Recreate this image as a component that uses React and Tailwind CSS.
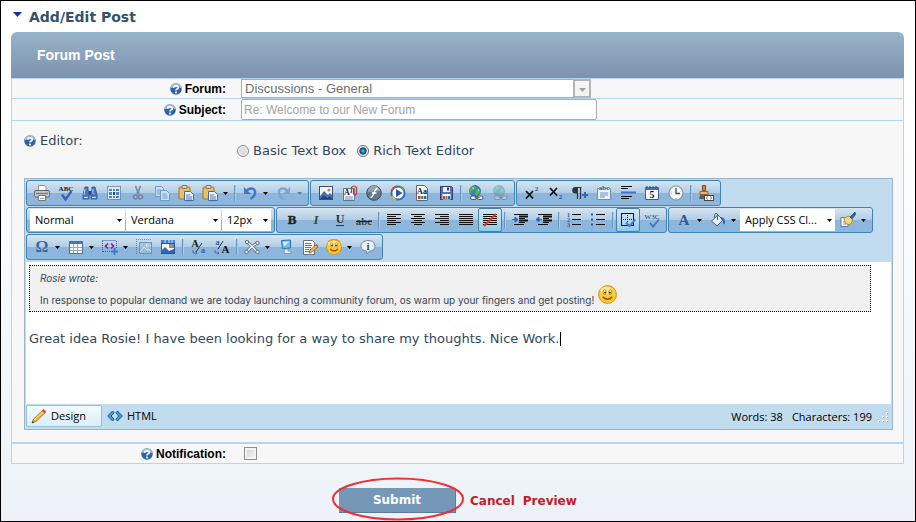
import React from "react";

const verdana = "font-['DejaVu_Sans',sans-serif]";
const arial = "font-['Liberation_Sans',sans-serif]";
const segoe = "font-['Open_Sans',sans-serif]";
const quote = "font-['Inter','Liberation_Sans',sans-serif]";

const Svg = ({ children, className = "size-4" }) => (
  <svg viewBox="0 0 16 16" className={`${className} shrink-0`} fill="none" aria-hidden="true">
    {children}
  </svg>
);

const Lines = ({ rows, stroke = "#111" }) => (
  <g stroke={stroke} strokeWidth="1">
    {rows.map(([x1, x2, y]) => (
      <path key={y} d={`M${x1} ${y + 0.5}H${x2}`} />
    ))}
  </g>
);

const clipboard = (
  <>
    <rect x="1" y="2" width="11" height="12" rx="1" fill="#f0bd5c" stroke="#a8742a" />
    <rect x="4" y="0.5" width="5" height="3" rx="1" fill="#ddd" stroke="#6d6d6d" />
    <path d="M6.500 6.500h6l3 3v6h-9z" fill="#eef5ff" stroke="#3f68a8" />
    <path d="M8 10h4M8 12h6M8 14h6" stroke="#4d78b5" />
  </>
);

const picture = (
  <>
    <rect x="1.500" y="1.500" width="13" height="13" fill="#f3f8ff" stroke="#31527f" />
    <path d="M2 14v-3l4-5 4 4 2-2 2 2v4z" fill="#4a6fae" />
    <path d="M2 14l4-4 3 3 3-2 2 3z" fill="#27457c" />
    <circle cx="11" cy="5" r="1.600" fill="#e07f33" />
  </>
);

const globe = (
  <>
    <circle cx="7" cy="6" r="5.500" fill="#3b82c8" stroke="#1c5a8a" strokeWidth=".6" />
    <path d="M3 2.500q3-2 5 0l-1 2-3 1-2 3q-1-3 1-6zM8 5l3-1 1 3-3 4-2-2z" fill="#58b83c" />
    <path d="M4 2.500l2 1M10 4l1 2" stroke="#d3f2a8" strokeWidth=".8" />
    <rect x="2.500" y="11" width="6" height="3.500" rx="1.700" fill="#e9edf2" stroke="#4b5663" />
    <rect x="9" y="11" width="6" height="3.500" rx="1.700" fill="#e9edf2" stroke="#4b5663" />
    <path d="M6.500 12.700h5" stroke="#4b5663" />
  </>
);

const smile = (
  <>
    <circle cx="8" cy="8" r="7.500" fill="#fbcf2d" stroke="#d38a12" strokeWidth=".8" />
    <ellipse cx="7" cy="4.500" rx="5" ry="3" fill="#ffe97b" />
    <ellipse cx="5.600" cy="6" rx="1.300" ry="2" fill="#fff" stroke="#775017" strokeWidth=".5" />
    <ellipse cx="10.400" cy="6" rx="1.300" ry="2" fill="#fff" stroke="#775017" strokeWidth=".5" />
    <circle cx="5.900" cy="6.400" r=".8" fill="#2b1a05" />
    <circle cx="10.100" cy="6.400" r=".8" fill="#2b1a05" />
    <path d="M4 10q4 4 8 0" stroke="#b3401a" strokeWidth="1.200" />
  </>
);

const glyph = (text, props) => (
  <text fontFamily="Liberation Serif, serif" textAnchor="middle" {...props}>
    {text}
  </text>
);

const icons = {
  print: (
    <>
      <path d="M4.500 6V.500h6l1.500 2V6" fill="#fff" stroke="#8a8a8a" />
      <rect x=".5" y="5.500" width="15" height="6.500" rx="1.500" fill="#c9cbd0" stroke="#60646c" />
      <path d="M2 8.500h12" stroke="#7b7f87" strokeWidth="1.500" />
      <path d="M4.500 10.500h7v5h-7z" fill="#fff" stroke="#777" />
      <path d="M6 13.500h4" stroke="#999" />
      <circle cx="13" cy="7" r=".7" fill="#e0953e" />
    </>
  ),
  spell: (
    <>
      {glyph("ABC", { x: 8, y: 6, fontSize: 7, fontWeight: 700, fill: "#222" })}
      <path d="M4 9.500l3.500 5 6-8.500" stroke="#3c62b5" strokeWidth="2.400" />
    </>
  ),
  find: (
    <>
      <path d="M3 2h3v3l1 2v7H1v-4zM10 2h3l2 8v4H9V7l1-2z" fill="#4c76bd" stroke="#2c4f8c" strokeWidth=".8" />
      <path d="M7 6h2v4H7z" fill="#2c4f8c" />
      <path d="M3 4l-1 6M11 4v5" stroke="#b9d0f2" />
      <path d="M2 12.500h4M10 12.500h4" stroke="#dce8fa" />
    </>
  ),
  selectAll: (
    <>
      <rect x="1.500" y="1.500" width="13" height="13" stroke="#244e91" strokeDasharray="1 1" fill="#dcebfa" />
      <path d="M3 4h10v9H3z" fill="#4c83cc" />
      <path d="M3 6.500h10M3 10.500h10M6.500 4v9M9.500 4v9" stroke="#e9f3ff" />
      <path d="M7 7h2v3H7z" fill="#1c4382" />
    </>
  ),
  cut: (
    <g stroke="#7489a3" strokeWidth="1.600">
      <path d="M5.500 1l3 8M10.500 1l-3 8" />
      <circle cx="5.500" cy="12" r="2" />
      <circle cx="10.500" cy="12" r="2" />
      <path d="M6.500 8h3" />
    </g>
  ),
  copy: (
    <g fill="#c9dff4" stroke="#6f9bcb">
      <path d="M1.500 1.500h6l2 2v8h-8z" />
      <path d="M3 5h4M3 7h4M3 9h3" />
      <path d="M6.500 5.500h6l3 3v7h-9z" />
      <path d="M8.500 9h4M8.500 11h5M8.500 13h5" />
    </g>
  ),
  paste: clipboard,
  undo: (
    <>
      <path d="M4.500 6C8 1.500 14 3.500 13 8.500c-.4 2.500-2 4-4.500 5.500" stroke="#3f78cb" strokeWidth="2.400" />
      <path d="M2 2v7h7z" fill="#3f78cb" />
    </>
  ),
  redo: (
    <>
      <path d="M11.500 6C8 1.500 2 3.500 3 8.500c.4 2.500 2 4 4.500 5.500" stroke="#7ba6d3" strokeWidth="2.400" />
      <path d="M14 2v7H7z" fill="#7ba6d3" />
    </>
  ),
  image: picture,
  doc: (
    <>
      <path d="M1.500 3.500h11v12h-11z" fill="#f8fbff" stroke="#5f7590" />
      {glyph("A", { x: 5, y: 10, fontSize: 8, fontWeight: 700, fill: "#111" })}
      <path d="M8 7h1M3 12h8M3 14h8" stroke="#6b8bb6" />
      <path d="M9.500 8V2.500q2.500-3 5 0V9q-1.500 2-3 0V4" stroke="#c0352d" strokeWidth="1.200" />
    </>
  ),
  flash: (
    <>
      <circle cx="8" cy="8" r="7.300" fill="#66788c" stroke="#3d4b5b" />
      <path d="M2 7a6 6 0 0112-1z" fill="#95a4b3" />
      <path d="M11.500 3.500C8 3.500 8 12.500 4.500 12.500M6 8h4.500" stroke="#fff" strokeWidth="1.600" />
    </>
  ),
  media: (
    <>
      <circle cx="8" cy="8" r="6.600" stroke="#2f6fc4" strokeWidth="2" fill="#fff" />
      <path d="M2 5a6.600 6.600 0 014.500-3.600" stroke="#d9482e" strokeWidth="2" />
      <path d="M9.500 1.600A6.600 6.600 0 0114 5.500" stroke="#56a83a" strokeWidth="2" />
      <path d="M2 11a6.600 6.600 0 004 3.300" stroke="#e6b52c" strokeWidth="2" />
      <path d="M6 4l6.500 4L6 12z" fill="#2456ab" />
    </>
  ),
  template: (
    <>
      <path d="M2.500.500h8l3 3v12h-11z" fill="#fff" stroke="#5c6773" />
      {glyph("Aa", { x: 8, y: 9, fontSize: 8, fontWeight: 700, fill: "#111" })}
      <path d="M4 11h2.500v3H4z" fill="#cf3f32" />
      <path d="M7 11h2.500v3H7z" fill="#3aa03d" />
      <path d="M10 11h2.500v3H10z" fill="#3264bd" />
    </>
  ),
  save: (
    <>
      <path d="M2.500 1.500h11l1 1v12h-12z" fill="#5a70bd" stroke="#2b3b7b" />
      <path d="M5 2h7v5H5z" fill="#edf2fb" />
      <path d="M9 2.500h2v3H9z" fill="#2b3b7b" />
      <path d="M4.500 9h8v5.500h-8z" fill="#fff" />
      <path d="M5 11h2v3H5z" fill="#cf3f32" />
      <path d="M7.500 11h2v3h-2z" fill="#3aa03d" />
      <path d="M10 11h2v3h-2z" fill="#3264bd" />
    </>
  ),
  link: globe,
  unlink: <g opacity=".4">{globe}</g>,
  sup: (
    <>
      <path d="M2 6l7 7.500M9 6l-7 7.500" stroke="#111" strokeWidth="1.800" />
      {glyph("2", { x: 12.5, y: 6, fontSize: 7, fontWeight: 700, fill: "#2f55a5" })}
    </>
  ),
  sub: (
    <>
      <path d="M2 3l7 7.500M9 3l-7 7.500" stroke="#111" strokeWidth="1.800" />
      {glyph("2", { x: 12.5, y: 14, fontSize: 7, fontWeight: 700, fill: "#2f55a5" })}
    </>
  ),
  paragraph: (
    <>
      <path d="M9.500 2.500H4M5.500 8v6M8.500 2v12" stroke="#333" strokeWidth="1.200" />
      <path d="M6 2H3.500a3 3 0 000 6.500H6z" fill="#333" />
      <path d="M10 10h6M13 7v6" stroke="#3466bd" strokeWidth="2" />
    </>
  ),
  groupbox: (
    <>
      <path d="M1.500 3.500h13v11h-13z" fill="#eaf3fd" stroke="#6b8fc0" />
      <path d="M3 1h10v4H3z" fill="#d3e4f4" />
      {glyph("abc", { x: 8, y: 5, fontSize: 7, fontWeight: 700, fill: "#2a4d91" })}
      <path d="M4 8h8M4 10h8M4 12h5" stroke="#6b8fc0" />
    </>
  ),
  rule: (
    <>
      <Lines rows={[[1, 12, 1], [1, 8, 3], [1, 12, 11], [1, 9, 13]]} />
      <path d="M1 7.500h15" stroke="#3b72cb" strokeWidth="2" />
    </>
  ),
  date: (
    <>
      <path d="M1.500 2.500h13v12h-13z" fill="#fff" stroke="#3d5c93" />
      <path d="M1.500 2h13v3h-13z" fill="#466fb4" />
      <path d="M3 1v2M6 1v2M9 1v2M12 1v2" stroke="#24427c" />
      {glyph("5", { x: 8, y: 13, fontSize: 10, fontWeight: 700, fill: "#111" })}
    </>
  ),
  time: (
    <>
      <circle cx="8" cy="8" r="7" fill="#f7f9fb" stroke="#8a96a4" strokeWidth="1.200" />
      <path d="M8 3v5.500h4" stroke="#38506e" strokeWidth="1.300" />
      <path d="M2.500 8h1M8 13v1" stroke="#888" />
    </>
  ),
  formatStrip: (
    <>
      <path d="M4.500.500h3v5h-3z" fill="#d98445" stroke="#8d4a20" />
      <path d="M2 6.500h8v3H2z" fill="#e8b27c" stroke="#8d4a20" strokeWidth=".8" />
      <path d="M2 10h7l-1 4H1z" fill="#5c6068" />
      <rect x="6.500" y="10.500" width="9" height="5" fill="#fff" stroke="#444" />
      <path d="M9.500 11.500L8.500 13l1 1.500M12.500 11.500l1 1.500-1 1.500" stroke="#333" strokeWidth=".8" />
    </>
  ),
  bold: glyph("B", { x: 8, y: 12, fontSize: 13, fontWeight: 700, fill: "#222", stroke: "#222", strokeWidth: 0.4 }),
  italic: glyph("I", { x: 8, y: 12, fontSize: 13, fontWeight: 700, fontStyle: "italic", fill: "#444" }),
  underline: (
    <>
      {glyph("U", { x: 8, y: 11, fontSize: 12, fontWeight: 700, fill: "#333" })}
      <path d="M4 13.500h8" stroke="#333" />
    </>
  ),
  strike: (
    <>
      {glyph("abc", { x: 8, y: 13, fontSize: 11, fontWeight: 700, fill: "#444" })}
      <path d="M0 9.500h16" stroke="#222" />
    </>
  ),
  left: <Lines rows={[[1, 15, 2], [1, 10, 4], [1, 15, 6], [1, 10, 8], [1, 15, 10], [1, 10, 12]]} />,
  center: <Lines rows={[[1, 15, 2], [4, 12, 4], [1, 15, 6], [4, 12, 8], [1, 15, 10], [4, 12, 12]]} />,
  right: <Lines rows={[[1, 15, 2], [6, 15, 4], [1, 15, 6], [6, 15, 8], [1, 15, 10], [6, 15, 12]]} />,
  justify: <Lines rows={[[1, 15, 2], [1, 15, 4], [1, 15, 6], [1, 15, 8], [1, 15, 10], [1, 15, 12]]} />,
  noAlign: (
    <>
      <Lines rows={[[1, 15, 2], [1, 15, 4], [1, 15, 6], [1, 15, 8], [1, 15, 10], [1, 15, 12]]} />
      <path d="M2 14L14 2" stroke="#e03a1c" strokeWidth="1.800" />
    </>
  ),
  indent: (
    <>
      <Lines rows={[[2, 16, 2], [7, 16, 4], [7, 13, 6], [7, 16, 8], [7, 13, 10], [2, 12, 12]]} />
      <path d="M7 4.500h9M7 8.500h9" stroke="#111" strokeWidth="2" />
      <path d="M0 7.500h3V5l3 2.500L3 10V7.500z" fill="#2e63bb" stroke="#2e63bb" />
    </>
  ),
  outdent: (
    <>
      <Lines rows={[[2, 16, 2], [7, 16, 4], [7, 13, 6], [7, 16, 8], [7, 13, 10], [2, 12, 12]]} />
      <path d="M7 4.500h9M7 8.500h9" stroke="#111" strokeWidth="2" />
      <path d="M6 7.500H3V5L0 7.500 3 10V7.500z" fill="#2e63bb" stroke="#2e63bb" />
    </>
  ),
  ordered: (
    <>
      <Lines rows={[[6, 15, 2], [6, 15, 7], [6, 15, 12]]} />
      {glyph("1", { x: 2.5, y: 5, fontSize: 6, fontWeight: 700, fill: "#2f55a5" })}
      {glyph("2", { x: 2.5, y: 10, fontSize: 6, fontWeight: 700, fill: "#2f55a5" })}
      {glyph("3", { x: 2.5, y: 15, fontSize: 6, fontWeight: 700, fill: "#2f55a5" })}
    </>
  ),
  unordered: (
    <>
      <Lines rows={[[6, 15, 2], [6, 15, 7], [6, 15, 12]]} />
      <path d="M1 1.500h2v2H1zM1 6.500h2v2H1zM1 11.500h2v2H1z" fill="#2f55a5" />
    </>
  ),
  borders: (
    <>
      <rect x="1.500" y="1.500" width="12" height="12" stroke="#111" />
      <path d="M7.500 3v10M3 7.500h10" stroke="#111" strokeDasharray="1 1" />
      <path d="M6 10.500l3.500 3.500 6-6.500" stroke="#4b7ed0" strokeWidth="2" />
    </>
  ),
  w3c: (
    <>
      {glyph("W3C", { x: 8, y: 6.5, fontSize: 7, fill: "#2b3d66" })}
      <path d="M6 11l3 3.500 6-7" stroke="#4774c4" strokeWidth="1.800" />
    </>
  ),
  color: glyph("A", { x: 8, y: 13, fontSize: 15, fontWeight: 700, fill: "#34558f" }),
  bucket: (
    <>
      <path d="M1.500 9L8 3l5 5-6 6z" fill="#e7eef6" stroke="#52657e" />
      <path d="M7.500 8V2q-2-2-3 1v3" stroke="#52657e" />
      <path d="M11 5q5 1 4 7-2 1-2-3l-3-3z" fill="#3465b5" />
    </>
  ),
  painter: (
    <>
      <path d="M1 5.500h7v9H1z" fill="#f8fbff" stroke="#667b94" />
      <path d="M3 10h5M3 12h5" stroke="#87a0bd" />
      <path d="M4 6l5-2 4 4-3 5-5-2z" fill="#f4d77c" stroke="#a08435" strokeWidth=".8" />
      <path d="M10 5l5-5 1 2-4 5z" fill="#3a5da8" stroke="#27437e" strokeWidth=".6" />
    </>
  ),
  symbol: glyph("Ω", { x: 8, y: 13, fontSize: 16, fontWeight: 700, fill: "#3b68ad" }),
  table: (
    <>
      <rect x="1.500" y="2.500" width="13" height="12" fill="#fff" stroke="#4c709f" />
      <path d="M1 2h14v3H1z" fill="#4576bd" />
      <path d="M2 8.500h12M2 11.500h12M5.500 5v9M9.500 5v9" stroke="#8da9cb" />
    </>
  ),
  snippet: (
    <>
      <path d="M.500 1.500h14M14.500 2v7M.500 2v11M1 12.500h8" stroke="#345e9d" strokeDasharray="1 1" />
      <path d="M6 4.500L3.500 7 6 9.500M9 4.500L11.500 7 9 9.500" stroke="#9a1a85" strokeWidth="1.700" />
      <path d="M9 12.500h7M12.500 9v7" stroke="#3d78d0" strokeWidth="1.800" />
    </>
  ),
  imageMap: (
    <g opacity=".65">
      <path d="M0 .500h16M.500 0v16" stroke="#40566e" strokeDasharray="1 1" />
      <rect x="3.500" y="3.500" width="12" height="11" fill="#9fbddb" stroke="#55789e" />
      <path d="M4 13l4-5 3 3 2-1 2 3" stroke="#fff" />
      <circle cx="11.500" cy="6.500" r="1.300" stroke="#fff" />
    </g>
  ),
  imageEdit: (
    <>
      <rect x="1.500" y="4.500" width="13" height="10" fill="#f2f7ff" stroke="#31527f" />
      <path d="M2 14v-3l3-3 4 4 5-2v4z" fill="#3565ad" />
      <path d="M1 1h14v3H1z" fill="#3f7fd0" />
      <path d="M5 1v3M9 1v3M12 1v3" stroke="#dcebfb" />
      <path d="M9 5h5v4H9z" fill="#5594dd" />
      <circle cx="11" cy="6.800" r="1.500" fill="#e07f33" />
    </>
  ),
  lower: (
    <>
      {glyph("A", { x: 5, y: 8, fontSize: 10, fontWeight: 700, fill: "#111" })}
      {glyph("a", { x: 13, y: 14, fontSize: 8, fontWeight: 700, fill: "#315fad" })}
      <path d="M6 13L12 4" stroke="#333" />
      <path d="M3 11v3h4M5.500 12.500L7 14l-1.500 1.500" stroke="#315fad" strokeWidth=".8" />
    </>
  ),
  upper: (
    <>
      {glyph("a", { x: 3.5, y: 6, fontSize: 8, fontWeight: 700, fill: "#315fad" })}
      {glyph("A", { x: 11.5, y: 14, fontSize: 11, fontWeight: 700, fill: "#111" })}
      <path d="M4 10L9 2" stroke="#333" />
      <path d="M1 11v3h4M3.500 12.500L5 14l-1.500 1.500" stroke="#315fad" strokeWidth=".8" />
    </>
  ),
  module: (
    <>
      <path d="M3 3l5 4.500M13 4L8 7.500 13 13M8 7.500L2.500 13" stroke="#5b6b7c" strokeWidth="3" />
      <path d="M3 3l5 4.500M13 4L8 7.500 13 13M8 7.500L2.500 13" stroke="#f4f7fa" strokeWidth="1.400" />
      <g fill="#fff" stroke="#5b6b7c">
        <circle cx="3" cy="3" r="1.700" />
        <circle cx="13.500" cy="4" r="1.700" />
        <circle cx="2.500" cy="13" r="1.700" />
        <circle cx="13.500" cy="13" r="1.700" />
      </g>
    </>
  ),
  fullscreen: (
    <>
      <path d="M3.500 1.500l9-.5v8l-8 .5z" fill="#6cc1ef" stroke="#2c73ad" />
      <path d="M5 3l6-.5-5 5z" fill="#d5f1ff" />
      <path d="M7 10h3v2h2.500l1 2.500h-7L6 12z" fill="#e5edf5" stroke="#6c8eb0" strokeWidth=".8" />
    </>
  ),
  trackChanges: (
    <>
      <path d="M1.500 1.500h9l2 2v12h-11z" fill="#fff" stroke="#66727f" />
      <path d="M3 4.500h6M3 6.500h7M3 8.500h6M3 10.500h4M3 12.500h4" stroke="#6a7786" />
      <path d="M7 14l1-3 6-5 2 2-6 5z" fill="#edb458" stroke="#8f5f1f" strokeWidth=".8" />
      <path d="M13.500 6l1-1 2 2-1 1z" fill="#d23b3b" />
    </>
  ),
  emoticon: (
    <>
      {smile}
      <path d="M2 2.500q6-4 12 0" stroke="#f08a2c" strokeWidth="1.200" />
    </>
  ),
  info: (
    <>
      <path d="M8 1.500c9 0 9 10.500 1.500 10.500L7 15l-.5-3C-1.500 11.500-.500 1.500 8 1.500z" fill="#eef3f9" stroke="#7186a0" />
      {glyph("i", { x: 8, y: 10.5, fontSize: 11, fontWeight: 700, fill: "#29508f" })}
    </>
  ),
};

const Arrow = ({ dim }) => (
  <svg viewBox="0 0 5 3" className="h-[3px] w-[5px] shrink-0" aria-hidden="true">
    <path d="M0 0h5L2.500 3z" fill={dim ? "#5d7f9f" : "#000"} />
  </svg>
);

const Tool = ({ icon, label, active, menu, dim }) => (
  <button
    type="button"
    aria-label={label}
    aria-pressed={active ? true : undefined}
    className={`flex h-6 items-center ${menu ? "w-[34px] gap-[5px] pl-1" : "w-6 justify-center"} ${
      active ? "rounded-[2px] border border-[#4d7f9f] bg-linear-to-b from-[#d3e5ef] via-[#b5dcef] to-[#8ccbea]" : ""
    }`}
  >
    <Svg>{icons[icon]}</Svg>
    {menu && <Arrow dim={dim} />}
  </button>
);

const Sep = () => <span className="mx-[2px] h-4 w-[2px] border-l border-[#6797c5] bg-[#a9cdea]" />;

const Group = ({ children, label }) => (
  <div
    role="toolbar"
    aria-label={label}
    className="flex h-[26px] items-center rounded-[3px] border border-[#3f82b6] bg-linear-to-b from-[#d6e5f1] from-0% via-[#b2cee6] via-48% to-[#8db6dc] to-52% pr-[2px] pl-[3px]"
  >
    {children}
  </div>
);

const Pick = ({ value, label, width }) => (
  <span className={`relative mr-px flex h-[22px] items-center bg-white ${width}`}>
    <select aria-label={label} className={`size-full appearance-none pl-[5px] text-[11px] text-black ${segoe}`}>
      <option>{value}</option>
    </select>
    <span className="pointer-events-none absolute right-[3px] flex">
      <Arrow />
    </span>
  </span>
);

const Help = () => (
  <Svg className="size-3">
    <circle cx="8" cy="8" r="7.700" fill="#2f62a6" />
    <path d="M1 7a7 7 0 0114 0q-7-3-14 0z" fill="#9fb9d8" />
    <path d="M5 6.200Q5 3.600 8 3.600t3 2.300q0 1.400-1.700 2.200Q8 8.800 8 10" stroke="#fff" strokeWidth="2.200" />
    <circle cx="8" cy="12.700" r="1.400" fill="#fff" />
  </Svg>
);

const FieldRow = ({ id, label, children }) => (
  <div className="flex items-center border-t border-[#b4d6f2]">
    <div className="flex w-[214px] items-center justify-end gap-[3px]">
      <Help />
      <label htmlFor={id} className={`text-xs leading-4 font-bold text-black ${arial}`}>
        {label}
      </label>
    </div>
    <div className="flex grow pl-[15px]">{children}</div>
  </div>
);

const Radio = ({ label, checked }) => (
  <label className="flex items-center gap-1">
    <input
      type="radio"
      name="mode"
      defaultChecked={checked}
      className="size-3 appearance-none rounded-full border border-[#8a8d90] bg-[#dcdee0] shadow-[inset_0_0_0_1px_#f6f6f6] checked:border-[#66717b] checked:bg-radial checked:from-[#37b4e4] checked:from-10% checked:via-[#12395c] checked:via-45% checked:to-[#eef3f6] checked:to-60%"
    />
    {label}
  </label>
);

export default function App() {
  return (
    <main
      className={`min-h-screen border border-black bg-linear-to-b from-white from-20% to-[#ecf2f7] px-[10px] text-[#33475b] ${verdana}`}
    >
      <h1 className="flex h-[31px] items-center gap-[7px] pl-[2px] text-sm font-bold text-[#34536b]">
        <svg viewBox="0 0 9 5" className="mb-1 h-[5px] w-[9px]" aria-hidden="true">
          <path d="M0 0h9L4.500 5z" fill="#0b35a0" />
        </svg>
        Add/Edit Post
      </h1>

      <form className="mr-px">
        <h2
          className={`flex h-[46px] items-center rounded-t-[6px] bg-linear-to-b from-[#97b3c9] to-[#7e93ae] pl-[26px] text-sm font-bold text-white ${arial}`}
        >
          Forum Post
        </h2>

        <div className="border-x border-b border-[#b4d6f2] bg-[#f7f7f7]">
          <FieldRow id="forum" label="Forum:">
            <span className="relative flex h-[19px] w-[350px]">
              <select
                id="forum"
                className={`size-full appearance-none border border-[#ababab] bg-white pl-[3px] text-[13px] leading-4 text-[#6d6d6d] ${arial}`}
              >
                <option>Discussions - General</option>
              </select>
              <span className="pointer-events-none absolute inset-y-0 right-0 flex w-[18px] items-center justify-center border-2 border-[#b4b4b4] bg-[#f4f4f4] pt-[2px]">
                <svg viewBox="0 0 7 4" className="h-1 w-[7px]" aria-hidden="true">
                  <path d="M0 0h7L3.500 4z" fill="#a0a0a0" />
                </svg>
              </span>
            </span>
          </FieldRow>

          <FieldRow id="subject" label="Subject:">
            <input
              id="subject"
              type="text"
              defaultValue="Re: Welcome to our New Forum"
              className={`h-[21px] w-[356px] rounded-[2px] border border-[#ababab] bg-white px-[2px] text-xs text-[#a3a3a3] ${arial}`}
            />
          </FieldRow>

          <div className="border-t border-[#b4d6f2] pr-[10px] pb-3 pl-3">
            <fieldset className="flex h-[57px] text-[13px] leading-4">
              <div className="flex w-[213px] items-center gap-1 self-start pt-3">
                <Help />
                <span>Editor:</span>
              </div>
              <div className="flex gap-[11px] self-start pt-[22px]">
                <Radio label="Basic Text Box" />
                <Radio label="Rich Text Editor" checked />
              </div>
            </fieldset>

            <section className="border border-[#9ab6ca] bg-[#c2dcef] px-px">
              <div className="flex flex-col gap-px pt-px pb-[2px]">
                <div className="flex gap-px">
                  <Group label="Clipboard">
                    <Tool icon="print" label="Print" />
                    <Tool icon="spell" label="Spell check" />
                    <Tool icon="find" label="Find and replace" />
                    <Tool icon="selectAll" label="Select all" />
                    <Tool icon="cut" label="Cut" />
                    <Tool icon="copy" label="Copy" />
                    <Tool icon="paste" label="Paste" />
                    <Tool icon="paste" label="Paste options" menu />
                    <Sep />
                    <Tool icon="undo" label="Undo" menu />
                    <Tool icon="redo" label="Redo" menu dim />
                  </Group>
                  <Group label="Insert">
                    <Tool icon="image" label="Image manager" />
                    <Tool icon="doc" label="Document manager" />
                    <Tool icon="flash" label="Flash manager" />
                    <Tool icon="media" label="Media manager" />
                    <Tool icon="template" label="Template manager" />
                    <Tool icon="save" label="Save template" />
                    <Sep />
                    <Tool icon="link" label="Hyperlink manager" />
                    <Tool icon="unlink" label="Remove link" />
                  </Group>
                  <Group label="Text">
                    <Tool icon="sup" label="Superscript" />
                    <Tool icon="sub" label="Subscript" />
                    <Tool icon="paragraph" label="New paragraph" />
                    <Tool icon="groupbox" label="Group box" />
                    <Tool icon="rule" label="Horizontal rule" />
                    <Tool icon="date" label="Insert date" />
                    <Tool icon="time" label="Insert time" />
                    <Sep />
                    <Tool icon="formatStrip" label="Format stripper" />
                  </Group>
                </div>
                <div className="flex gap-px">
                  <Group label="Font">
                    <Pick value="Normal" label="Paragraph style" width="w-[95px]" />
                    <Pick value="Verdana" label="Font name" width="w-[95px]" />
                    <Pick value="12px" label="Size" width="w-[49px]" />
                  </Group>
                  <Group label="Formatting">
                    <Tool icon="bold" label="Bold" />
                    <Tool icon="italic" label="Italic" />
                    <Tool icon="underline" label="Underline" />
                    <Tool icon="strike" label="Strikethrough" />
                    <Sep />
                    <Tool icon="left" label="Align left" />
                    <Tool icon="center" label="Align center" />
                    <Tool icon="right" label="Align right" />
                    <Tool icon="justify" label="Justify" />
                    <Tool icon="noAlign" label="Remove alignment" active />
                    <Sep />
                    <Tool icon="indent" label="Indent" />
                    <Tool icon="outdent" label="Outdent" />
                    <Sep />
                    <Tool icon="ordered" label="Numbered list" />
                    <Tool icon="unordered" label="Bullet list" />
                    <Sep />
                    <Tool icon="borders" label="Show table borders" active />
                    <Tool icon="w3c" label="XHTML validator" />
                  </Group>
                  <Group label="Styles">
                    <Tool icon="color" label="Text color" menu />
                    <Tool icon="bucket" label="Background color" menu />
                    <Pick value="Apply CSS Cl..." label="CSS class" width="w-[95px]" />
                    <Tool icon="painter" label="Format sets" menu />
                  </Group>
                </div>
                <div className="flex gap-px">
                  <Group label="Extras">
                    <Tool icon="symbol" label="Insert symbol" menu />
                    <Tool icon="table" label="Insert table" menu />
                    <Tool icon="snippet" label="Insert snippet" menu />
                    <Tool icon="imageMap" label="Image map" />
                    <Tool icon="imageEdit" label="Image editor" />
                    <Sep />
                    <Tool icon="lower" label="Lower case" />
                    <Tool icon="upper" label="Upper case" />
                    <Sep />
                    <Tool icon="module" label="Module manager" menu />
                    <Tool icon="fullscreen" label="Full screen" />
                    <Tool icon="trackChanges" label="Track changes" />
                    <Tool icon="emoticon" label="Insert emoticon" menu />
                    <Tool icon="info" label="About" />
                  </Group>
                </div>
              </div>

              <div role="textbox" aria-label="Message" className="h-[142px] bg-white px-[3px] pt-[3px]">
                <blockquote
                  className={`mr-[17px] h-[47px] border border-dotted border-black bg-[#f0f0f0] px-[10px] pt-[5px] text-[10px] leading-[14px] ${quote}`}
                >
                  <cite className="block">Rosie wrote:</cite>
                  <p className="flex items-end gap-1">
                    <span className="pt-2">
                      In response to popular demand we are today launching a community forum, os warm up your fingers
                      and get posting!
                    </span>
                    <Svg className="mb-[3px] size-[19px]">{smile}</Svg>
                  </p>
                </blockquote>
                <p className="flex items-center pt-[19px] text-[13px] leading-4">
                  Great idea Rosie! I have been looking for a way to share my thoughts. Nice Work.
                  <span className="h-[14px] w-px bg-black" />
                </p>
              </div>

              <div className={`flex h-[25px] items-start pt-px text-[11px] text-black ${segoe}`}>
                <button
                  type="button"
                  className="flex h-[22px] w-[76px] items-center gap-1 rounded-[2px] border border-[#9cc0d6] bg-linear-to-b from-[#f3fafe] to-[#d9effa] pl-1"
                >
                  <Svg>
                    <path d="M1 15l1.500-4L12 2l2.500 2.500L5 13.500z" fill="#f2b632" stroke="#9a6a1b" strokeWidth=".8" />
                    <path d="M3.500 11.500L13 3" stroke="#ffe694" />
                    <path d="M11 2.500L12.500 1 15 3.500 13.500 5z" fill="#d23f37" />
                    <path d="M1 15l.700-2 1.300 1.300z" fill="#222" />
                  </Svg>
                  Design
                </button>
                <button type="button" className="flex h-[22px] items-center gap-1 pl-[5px]">
                  <Svg>
                    <path
                      d="M5.500 3L.700 8l4.800 5 1.700-1.800L4.200 8l3-3.200zM10.500 3l4.800 5-4.800 5-1.700-1.800L11.800 8l-3-3.200z"
                      fill="#3aa0dc"
                      stroke="#123f6e"
                      strokeWidth=".8"
                    />
                  </Svg>
                  HTML
                </button>
                <p className="ml-auto flex h-[24px] items-center gap-[9px]">
                  <span>Words: 38</span>
                  <span>Characters: 199</span>
                </p>
                <svg viewBox="0 0 12 12" className="mr-[2px] ml-[5px] size-3 self-center" aria-hidden="true">
                  <path
                    d="M9 1h2v2H9zM9 5h2v2H9zM9 9h2v2H9zM5 5h2v2H5zM5 9h2v2H5zM1 9h2v2H1z"
                    fill="#fff"
                  />
                  <path d="M10 2h1v1h-1zM10 6h1v1h-1zM10 10h1v1h-1zM6 6h1v1H6zM6 10h1v1H6zM2 10h1v1H2z" fill="#8a9fb0" />
                </svg>
              </div>
            </section>
          </div>

          <div className="border-t border-[#b4d6f2]">
            <FieldRow id="notify" label="Notification:">
              <span className="flex h-[19px] items-center pl-[3px]">
                <input
                  id="notify"
                  type="checkbox"
                  className="size-[13px] appearance-none border border-[#8c8e90] bg-linear-to-br from-[#cfd2d6] to-[#f6f6f6] shadow-[inset_0_0_0_2px_#f4f4f4]"
                />
              </span>
            </FieldRow>
          </div>
        </div>

        <div className="flex items-center pt-6 pl-[328px] text-xs font-bold text-[#c61a27]">
          <span className="relative flex">
            <button
              type="submit"
              className="h-[25px] w-[117px] border-r border-b border-[#5b7c9c] bg-[#7598b9] text-white"
            >
              Submit
            </button>
            <svg
              viewBox="0 0 132 44"
              className="pointer-events-none absolute -top-[11px] -left-[7px] h-11 w-[132px] max-w-none"
              fill="none"
              aria-hidden="true"
            >
              <ellipse cx="66" cy="22" rx="65" ry="20.500" stroke="#ee2f33" strokeWidth="2" />
            </svg>
          </span>
          <a href="#cancel" className="ml-[14px]">
            Cancel
          </a>
          <a href="#preview" className="ml-2">
            Preview
          </a>
        </div>
      </form>
    </main>
  );
}
